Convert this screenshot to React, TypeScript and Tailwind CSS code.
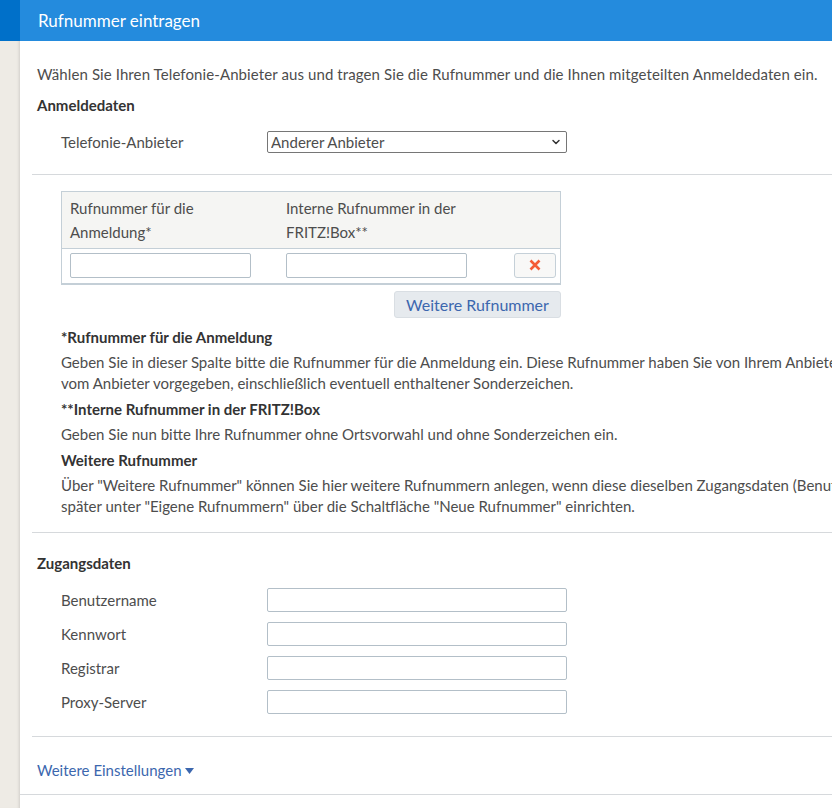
import { ChevronDown } from "lucide-react";

const labelCol = "w-[206px] shrink-0";
const inputCls =
  "w-[300px] h-[24px] border border-[#b3bfc8] rounded-[2px] bg-white px-2 text-[15px] outline-none";

const FieldRow = ({ label }: { label: string }) => (
  <div className="flex items-center pl-[24px]">
    <span className={labelCol}>{label}</span>
    <input type="text" className={inputCls} />
  </div>
);

const NoteBlock = ({ title, lines }: { title: string; lines: string[] }) => (
  <div className="pl-[24px]">
    <p className="font-bold text-[#333] mb-[4px] whitespace-nowrap">{title}</p>
    <p className="mb-[5px] whitespace-nowrap">
      {lines.map((line, i) => (
        <span key={i} className="block">
          {line}
        </span>
      ))}
    </p>
  </div>
);

export default function App() {
  return (
    <div
      className="w-[832px] h-[808px] overflow-hidden flex bg-white text-[15px] leading-[21px] text-[#4d4d4d]"
      style={{ fontFamily: "Lato, 'Noto Sans', sans-serif" }}
    >
      {/* side strip */}
      <div className="w-[20px] shrink-0 flex flex-col">
        <div className="h-[41px] bg-[#0070c9]" />
        <div className="flex-1 bg-[#eeebe5] shadow-[inset_-3px_0_3px_-2px_rgba(0,0,0,0.12)]" />
      </div>

      <div className="w-[1000px] shrink-0 flex flex-col">
        <div className="h-[41px] bg-[#248bdd] text-white text-[17px] flex items-center pl-[18px]">
          Rufnummer eintragen
        </div>

        <div className="pt-[23px] pl-[17px]">
          <p className="whitespace-nowrap tracking-[0.1px]">
            Wählen Sie Ihren Telefonie-Anbieter aus und tragen Sie die Rufnummer und die Ihnen mitgeteilten
            Anmeldedaten ein.
          </p>
          <p className="mt-[10px] font-bold text-[#333]">Anmeldedaten</p>

          <div className="mt-[15px] flex items-center pl-[24px]">
            <span className={labelCol}>Telefonie-Anbieter</span>
            <div className="relative w-[300px] h-[22px]">
              <select className="appearance-none w-full h-full border border-[#767676] rounded-[2px] bg-white pl-[3px] text-[15px] leading-[20px] text-[#4d4d4d] outline-none">
                <option>Anderer Anbieter</option>
              </select>
              <ChevronDown
                className="absolute right-[5px] top-[5px] w-[12px] h-[12px] text-[#333] pointer-events-none"
                strokeWidth={3}
              />
            </div>
          </div>
        </div>

        <div className="mt-[21px] ml-[12px]">
          <div className="h-px bg-[#d6d9dc]" />
        </div>

        <div className="pl-[41px] mt-[16px]">
          <div className="w-[500px] border border-[#c4cfd7] border-b-2">
            <div className="bg-[#f5f5f3] border-b border-[#c4cfd7] grid grid-cols-[216px_216px_1fr] pl-[8px] pt-[4px] pb-[4px] leading-[24px]">
              <span>
                Rufnummer für die
                <br />
                Anmeldung*
              </span>
              <span>
                Interne Rufnummer in der
                <br />
                FRITZ!Box**
              </span>
              <span />
            </div>
            <div className="grid grid-cols-[216px_216px_1fr] items-center pl-[8px] pt-[3px] pb-[5px]">
              <input type="text" className="w-[181px] h-[25px] mt-[1px] border border-[#b3bfc8] rounded-[2px]" />
              <input type="text" className="w-[181px] h-[25px] mt-[1px] border border-[#b3bfc8] rounded-[2px]" />
              <div className="flex justify-end pr-[4px]">
                <button className="w-[42px] h-[25px] border border-[#c5d0d8] rounded-[3px] bg-[#f8f8f7] flex items-center justify-center">
                  <svg width="12" height="12" viewBox="0 0 12 12">
                    <path d="M1.5 1.5 L10.5 10.5 M10.5 1.5 L1.5 10.5" stroke="#f45b36" strokeWidth="2.6" />
                  </svg>
                </button>
              </div>
            </div>
          </div>
          <div className="w-[500px] flex justify-end mt-[6px]">
            <button className="w-[167px] h-[27px] bg-[#e6eaee] border border-[#d9dee3] rounded-[3px] text-[16px] text-[#3c67ae]">
              Weitere Rufnummer
            </button>
          </div>
        </div>

        <div className="pl-[17px] mt-[9px]">
          <NoteBlock
            title="*Rufnummer für die Anmeldung"
            lines={[
              "Geben Sie in dieser Spalte bitte die Rufnummer für die Anmeldung ein. Diese Rufnummer haben Sie von Ihrem Anbieter erhalten. Geben Sie die Rufnummer genau so ein, wie",
              "vom Anbieter vorgegeben, einschließlich eventuell enthaltener Sonderzeichen.",
            ]}
          />
          <NoteBlock
            title="**Interne Rufnummer in der FRITZ!Box"
            lines={["Geben Sie nun bitte Ihre Rufnummer ohne Ortsvorwahl und ohne Sonderzeichen ein."]}
          />
          <NoteBlock
            title="Weitere Rufnummer"
            lines={[
              'Über "Weitere Rufnummer" können Sie hier weitere Rufnummern anlegen, wenn diese dieselben Zugangsdaten (Benutzername, Kennwort) nutzen. Andere Rufnummern können Sie',
              'später unter "Eigene Rufnummern" über die Schaltfläche "Neue Rufnummer" einrichten.',
            ]}
          />
        </div>

        <div className="mt-[10px] ml-[12px]">
          <div className="h-px bg-[#d6d9dc]" />
        </div>

        <div className="pl-[17px] pt-[20px]">
          <p className="font-bold text-[#333]">Zugangsdaten</p>
          <div className="mt-[14px] flex flex-col gap-[10px]">
            <FieldRow label="Benutzername" />
            <FieldRow label="Kennwort" />
            <FieldRow label="Registrar" />
            <FieldRow label="Proxy-Server" />
          </div>
        </div>

        <div className="mt-[22px] ml-[12px]">
          <div className="h-px bg-[#d6d9dc]" />
        </div>

        <div className="pl-[17px] pt-[23px] pb-[13px]">
          <a className="inline-flex items-center gap-[3px] text-[#3c67ae] cursor-pointer">
            Weitere Einstellungen
            <svg width="9" height="6" viewBox="0 0 9 6">
              <path d="M0 0 H9 L4.5 6 Z" fill="#3c67ae" />
            </svg>
          </a>
        </div>
        <div className="h-px bg-[#d6d9dc]" />
      </div>
    </div>
  );
}
